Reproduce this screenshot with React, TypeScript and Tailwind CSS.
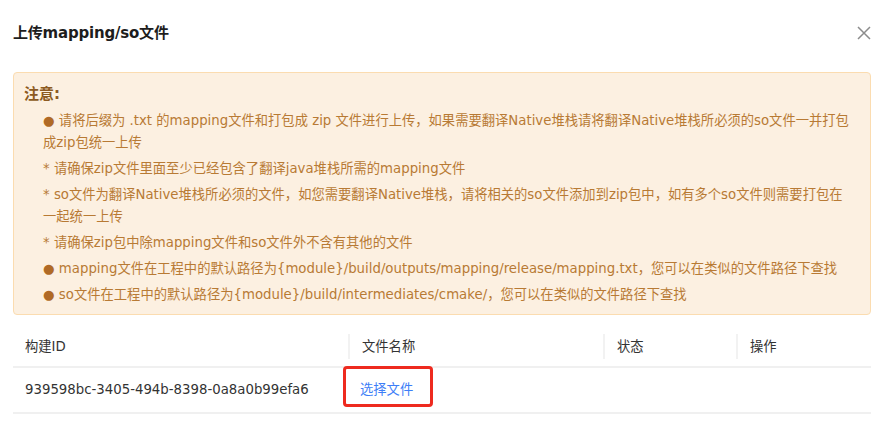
import React from 'react'

const notes = [
  { mark: '●', text: '请将后缀为 .txt 的mapping文件和打包成 zip 文件进行上传，如果需要翻译Native堆栈请将翻译Native堆栈所必须的so文件一并打包成zip包统一上传' },
  { mark: '*', text: '请确保zip文件里面至少已经包含了翻译java堆栈所需的mapping文件' },
  { mark: '*', text: 'so文件为翻译Native堆栈所必须的文件，如您需要翻译Native堆栈，请将相关的so文件添加到zip包中，如有多个so文件则需要打包在一起统一上传' },
  { mark: '*', text: '请确保zip包中除mapping文件和so文件外不含有其他的文件' },
  { mark: '●', text: 'mapping文件在工程中的默认路径为{module}/build/outputs/mapping/release/mapping.txt，您可以在类似的文件路径下查找' },
  { mark: '●', text: 'so文件在工程中的默认路径为{module}/build/intermediates/cmake/，您可以在类似的文件路径下查找' },
]

const columns = [
  { title: '构建ID', w: 'w-[335px]' },
  { title: '文件名称', w: 'w-[255px]' },
  { title: '状态', w: 'w-[133px]' },
  { title: '操作', w: 'flex-1' },
]

export default function App() {
  return (
    <div
      className="w-[886px] h-[444px] bg-white px-[13px] pt-[22px] overflow-hidden"
      style={{ fontFamily: '"DejaVu Sans", "Noto Sans CJK SC", sans-serif' }}
    >
      <div className="flex items-center justify-between h-[22px]">
        <h1 className="text-[15px] leading-[22px] font-bold text-[#1d1d1d] tracking-[-0.2px]">上传mapping/so文件</h1>
        <button className="mr-[1px] text-[#8c8c8c]">
          <svg width="16" height="16" viewBox="0 0 16 16" fill="none" stroke="currentColor" strokeWidth="1.5">
            <path d="M2 2L14 14M14 2L2 14" />
          </svg>
        </button>
      </div>

      <div className="mt-[28px] w-[858px] rounded-[4px] border border-[#fbdcb0] bg-[#fcf0e1] pl-[10px] pr-[18px] pt-[10px] pb-[8px]">
        <div className="text-[15px] leading-[22px] font-bold text-[#8c5a22]">注意:</div>
        <ul className="mt-[5px] pl-[19px] flex flex-col gap-[4px] text-[13.3px] leading-[22px] text-[#b87a34]">
          {notes.map((n, i) => (
            <li key={i}>
              <span className={n.mark === '●' ? 'text-[#b06a26]' : ''}>{n.mark}</span> {n.text}
            </li>
          ))}
        </ul>
      </div>

      <div className="mt-[12px] w-[858px] text-[13.3px] text-[#333333]">
        <div className="flex h-[41px] items-center border-b-2 border-[#f0f0f0]">
          {columns.map((c, i) => (
            <div key={c.title} className={`${c.w} h-[25px] flex items-center pl-[12px] ${i > 0 ? 'border-l-2 border-[#f2f2f2]' : ''}`}>
              {c.title}
            </div>
          ))}
        </div>
        <div className="flex h-[46px] items-center border-b-2 border-[#f0f0f0]">
          <div className="w-[335px] pl-[12px] leading-[20px]">939598bc-3405-494b-8398-0a8a0b99efa6</div>
          <div className="w-[255px] pl-[12px] leading-[20px] relative">
            <span className="text-[#3d7ef7]">选择文件</span>
            <div className="absolute left-[-5px] top-[-14px] w-[90px] h-[41px] rounded-[4px] border-[3px] border-[#ee2a1f]" />
          </div>
          <div className="w-[133px]" />
          <div className="flex-1" />
        </div>
      </div>
    </div>
  )
}
